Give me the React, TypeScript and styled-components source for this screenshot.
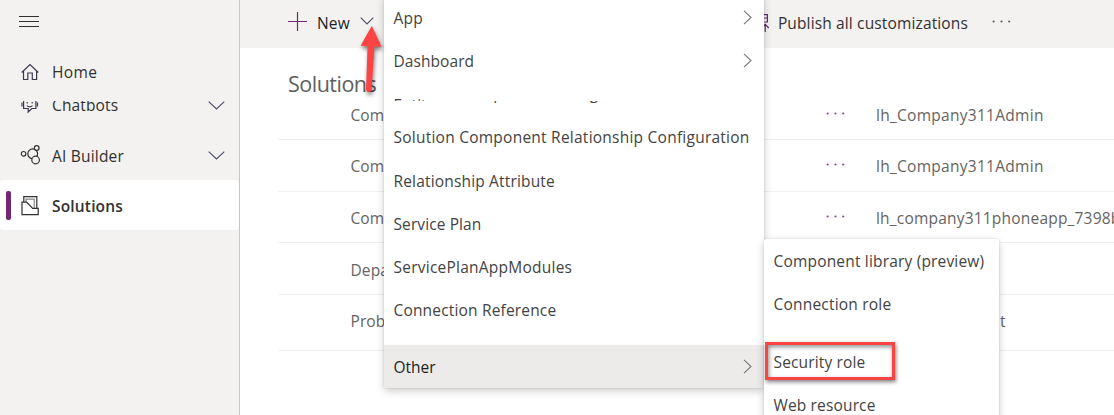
import React from 'react';
import styled, { createGlobalStyle } from 'styled-components';

const Global = createGlobalStyle`
  * { box-sizing: border-box; }
  body { margin: 0; font-family: 'Open Sans', 'Noto Sans', sans-serif; font-size: 15.5px; color: #323130; background: #fff; overflow: hidden; }
  svg { display: block; flex: none; }
`;

const Shell = styled.div`
  display: grid;
  grid-template-columns: 240px 1fr;
  width: 1114px;
  height: 415px;
  position: relative;
  overflow: hidden;
`;

const Sidebar = styled.nav`
  background: #f3f2f1;
  border-right: 1px solid #c8c6c4;
  display: flex;
  flex-direction: column;
`;

const MenuToggle = styled.div`
  height: 47px;
  padding: 16px 0 0 19px;
`;

const NavRow = styled.div<{ $active?: boolean }>`
  display: flex;
  align-items: center;
  flex: none;
  height: 50px;
  background: ${p => (p.$active ? '#fff' : 'transparent')};
  border-radius: ${p => (p.$active ? '3px' : '0')};
  font-weight: ${p => (p.$active ? 600 : 400)};
  padding-right: 14px;
`;

const ScrolledRow = styled.div`
  height: 29px;
  margin-top: 4px;
  overflow: hidden;

  ${NavRow} {
    height: 22px;
    margin-top: -7px;
  }
`;

const Accent = styled.span<{ $on?: boolean }>`
  width: 5px;
  height: 29px;
  margin: 0 8px 0 6px;
  border-radius: 2px;
  background: ${p => (p.$on ? '#742774' : 'transparent')};
`;

const NavIcon = styled.span`
  width: 22px;
  height: 22px;
  margin-right: 11px;
`;

const Label = styled.span<{ $ls?: number }>`
  letter-spacing: ${p => p.$ls ?? 0}px;
  line-height: 22px;
  white-space: nowrap;
`;

const NavLabel = styled(Label)<{ $drop?: boolean }>`
  flex: 1;
  padding-top: ${p => (p.$drop ? 2 : 0)}px;
`;

const Main = styled.main`
  min-width: 0;
  display: flex;
  flex-direction: column;
`;

const Toolbar = styled.header`
  height: 48px;
  flex: none;
  background: #f3f2f1;
  display: flex;
  align-items: center;
  padding: 0 103px 2px 48px;
`;

const NewButton = styled.div`
  display: flex;
  align-items: center;
  flex: 1;
  color: #201f1e;
`;

const Plus = styled.span`
  margin: 0 10px 3px 0;
`;

const ToolbarChevron = styled.span`
  margin: 0 0 5px 10px;
`;

const Publish = styled.div`
  display: flex;
  align-items: center;
  gap: 9px;
  margin-right: 24px;
`;

const ToolbarDots = styled.span`
  margin-bottom: 4px;
`;

const Title = styled.h1`
  margin: 20px 0 0 48px;
  height: 31px;
  font-size: 21.5px;
  line-height: 31px;
  font-weight: 400;
  letter-spacing: -0.5px;
  color: #605e5c;
`;

const Rows = styled.div`
  margin: -10px 0 0 38px;
`;

const Row = styled.div<{ $h: number; $pb: number }>`
  display: grid;
  grid-template-columns: 72.5px 475.5px 50px 1fr;
  align-items: end;
  height: ${p => p.$h}px;
  padding-bottom: ${p => p.$pb}px;
  border-bottom: 1px solid #f1f0ef;
  color: #666462;
`;

const DotsCell = styled.span`
  padding-bottom: 11px;
`;

const OwnerCell = styled(Label)<{ $indent?: number }>`
  padding-left: ${p => p.$indent ?? 0}px;
`;

const Menu = styled.div`
  position: absolute;
  left: 384px;
  top: -4px;
  width: 380px;
  height: 392px;
  background: #fff;
  border-radius: 2px;
  box-shadow: 0 3px 8px rgba(0, 0, 0, 0.2), 0 0 2px rgba(0, 0, 0, 0.16);
`;

const Item = styled.div<{ $active?: boolean; $gap?: number }>`
  display: flex;
  align-items: center;
  justify-content: space-between;
  height: 43px;
  margin-top: ${p => p.$gap ?? 0}px;
  padding: 0 12px 0 9.5px;
  background: ${p => (p.$active ? '#edebe9' : 'transparent')};
  color: ${p => (p.$active ? '#201f1e' : '#444342')};
`;

const Slice = styled.div<{ $h: number; $shift: number }>`
  height: ${p => p.$h}px;
  padding-left: 9.5px;
  overflow: hidden;
  color: #444342;

  ${Label} {
    display: block;
    margin-top: ${p => p.$shift}px;
  }
`;

const Submenu = styled(Menu)`
  left: 764px;
  top: 239px;
  width: 235px;
  height: 190px;
`;

const Highlight = styled.div`
  position: absolute;
  left: 765px;
  top: 342px;
  width: 130px;
  height: 38px;
  border: 3px solid #f94444;
  box-shadow: 1px 2px 4px rgba(0, 0, 0, 0.5), inset 1px 2px 4px rgba(0, 0, 0, 0.45);
`;

const Pointer = styled.svg`
  position: absolute;
  left: 352px;
  top: 20px;
  filter: drop-shadow(1px 3px 2px rgba(0, 0, 0, 0.5));
`;

const Chevron = ({ color = '#4b4a6a', w = 17, h = 9 }: { color?: string; w?: number; h?: number }) => (
  <svg width={w} height={h} viewBox={`0 0 ${w} ${h}`} fill="none" stroke={color} strokeWidth="1.1">
    <path d={`M.7 .7 L${w / 2} ${h - 1} L${w - 0.7} .7`} />
  </svg>
);

const ChevronRight = () => (
  <svg width="9" height="15" fill="none" stroke="#797775" strokeWidth="1.1">
    <path d="M1 .8 L8 7.5 L1 14.2" />
  </svg>
);

const Dots = ({ color }: { color: string }) => (
  <svg width="19" height="3" fill={color}>
    <circle cx="1.6" cy="1.5" r="1.1" />
    <circle cx="9.5" cy="1.5" r="1.1" />
    <circle cx="17.2" cy="1.5" r="1.1" />
  </svg>
);

const HomeIcon = () => (
  <svg width="22" height="22" fill="none" stroke="#3b3a50" strokeWidth="1.2">
    <path d="M2.7 11.5 L11 3.5 L19.3 11.5 M4.5 9.9 V18.5 H8.8 V12 H13.3 V18.5 H17.6 V9.9" />
  </svg>
);

const BotIcon = () => (
  <svg width="22" height="22" fill="none" stroke="#3b3a50" strokeWidth="1.2">
    <path d="M6 5 H4.6 V14.5 H9.2 V18 L12.8 14.5 H16.9 V5 H15.5 M3 8.5 V12.5 M18.5 8.5 V12.5 M8.2 8 V9.6 M13.2 8 V9.6 M7.8 11.6 Q10.7 14 13.6 11.6" />
  </svg>
);

const BuilderIcon = () => (
  <svg width="22" height="22" fill="#f3f2f1" stroke="#323130" strokeWidth="1.2">
    <circle cx="13.7" cy="9.8" r="4.9" />
    <circle cx="4.6" cy="9.8" r="2.3" />
    <circle cx="17.7" cy="4" r="2.4" />
    <circle cx="16.6" cy="16" r="3.8" />
  </svg>
);

const SolutionsIcon = () => (
  <svg width="22" height="22" fill="none" stroke="#323130" strokeWidth="1.2">
    <path d="M7 8 V5.2 H15.2 V14" stroke="#8a8886" />
    <path d="M4.8 8 V2.6 H17.8 V14" />
    <path d="M3 8.2 H7.6 L13.7 14.4 H19.2 V20.6 H3 Z" />
  </svg>
);

const PublishIcon = () => (
  <svg width="18" height="20" fill="none" stroke="#5c2e6e" strokeWidth="1.2">
    <path d="M1 17 V1.6 H16.4 V9 H9 M9 5 H16.4 M14.2 19 V12 M10.6 15 L14.2 11.4 L17.8 15" />
  </svg>
);

const rows = [
  { name: 'Com', owner: 'lh_Company311Admin', ls: 0.28, dots: true, h: 51, pb: 13 },
  { name: 'Com', owner: 'lh_Company311Admin', ls: 0.28, dots: true, h: 52, pb: 14 },
  { name: 'Com', owner: 'lh_company311phoneapp_7398b', ls: 0.2, dots: true, h: 51, pb: 13 },
  { name: 'Depa', h: 52, pb: 13 },
  { name: 'Prob', owner: 't', indent: 124, h: 56, pb: 18 },
];

const componentItems: [string, number][] = [
  ['Relationship Attribute', 0.17],
  ['Service Plan', 0.1],
  ['ServicePlanAppModules', 0.24],
  ['Connection Reference', 0.17],
];

export default function App() {
  return (
    <>
      <Global />
      <Shell>
        <Sidebar>
          <MenuToggle>
            <svg width="20" height="12" stroke="#323130" strokeWidth="1"><path d="M0 .5H20M0 5.5H20M0 10.5H20" /></svg>
          </MenuToggle>
          <NavRow><Accent /><NavIcon><HomeIcon /></NavIcon><NavLabel $ls={0.35}>Home</NavLabel></NavRow>
          <ScrolledRow>
            <NavRow><Accent /><NavIcon><BotIcon /></NavIcon><NavLabel $ls={0.14}>Chatbots</NavLabel><Chevron /></NavRow>
          </ScrolledRow>
          <NavRow><Accent /><NavIcon><BuilderIcon /></NavIcon><NavLabel $ls={0.2} $drop>AI Builder</NavLabel><Chevron /></NavRow>
          <NavRow $active><Accent $on /><NavIcon><SolutionsIcon /></NavIcon><NavLabel $ls={0.17} $drop>Solutions</NavLabel></NavRow>
        </Sidebar>
        <Main>
          <Toolbar>
            <NewButton>
              <Plus><svg width="19" height="19" stroke="#742774" strokeWidth="1.2"><path d="M9.5 0V19M0 9.5H19" /></svg></Plus>
              <Label $ls={0.2}>New</Label>
              <ToolbarChevron><Chevron w={14} h={8} /></ToolbarChevron>
            </NewButton>
            <Publish>
              <PublishIcon />
              <Label $ls={0.14}>Publish all customizations</Label>
            </Publish>
            <ToolbarDots><Dots color="#605e5c" /></ToolbarDots>
          </Toolbar>
          <Title>Solutions</Title>
          <Rows>
            {rows.map((r, i) => (
              <Row key={i} $h={r.h} $pb={r.pb}>
                <span />
                <Label $ls={0.1}>{r.name}</Label>
                <DotsCell>{r.dots && <Dots color="#8a458a" />}</DotsCell>
                {r.owner && <OwnerCell $ls={r.ls} $indent={r.indent}>{r.owner}</OwnerCell>}
              </Row>
            ))}
          </Rows>
        </Main>
        <Menu>
          <Item><Label $ls={0.2}>App</Label><ChevronRight /></Item>
          <Item><Label $ls={0.07}>Dashboard</Label><ChevronRight /></Item>
          <Slice $h={19} $shift={12}><Label>Entity</Label></Slice>
          <Slice $h={14} $shift={-19}><Label $ls={0.23}>Solution Component Configuration</Label></Slice>
          <Item><Label $ls={0.24}>Solution Component Relationship Configuration</Label></Item>
          {componentItems.map(([text, ls], i) => (
            <Item key={text} $gap={i === 0 ? 1 : 0}><Label $ls={ls}>{text}</Label></Item>
          ))}
          <Item $active $gap={14}><Label>Other</Label><ChevronRight /></Item>
        </Menu>
        <Submenu>
          <Item><Label $ls={0.18}>Component library (preview)</Label></Item>
          <Item><Label $ls={0.2}>Connection role</Label></Item>
          <Item $gap={15}><Label $ls={0.15}>Security role</Label></Item>
          <Item><Label $ls={0.15}>Web resource</Label></Item>
        </Submenu>
        <Highlight />
        <Pointer width="40" height="80" fill="#fc4444">
          <path d="M19.8 5.7 L29.6 26.8 L22.4 26.4 L19.6 69.5 Q19.2 72 16.8 72 Q14.2 72 14 69.5 L15.6 26.2 L8.6 25.8 Z" />
        </Pointer>
      </Shell>
    </>
  );
}
